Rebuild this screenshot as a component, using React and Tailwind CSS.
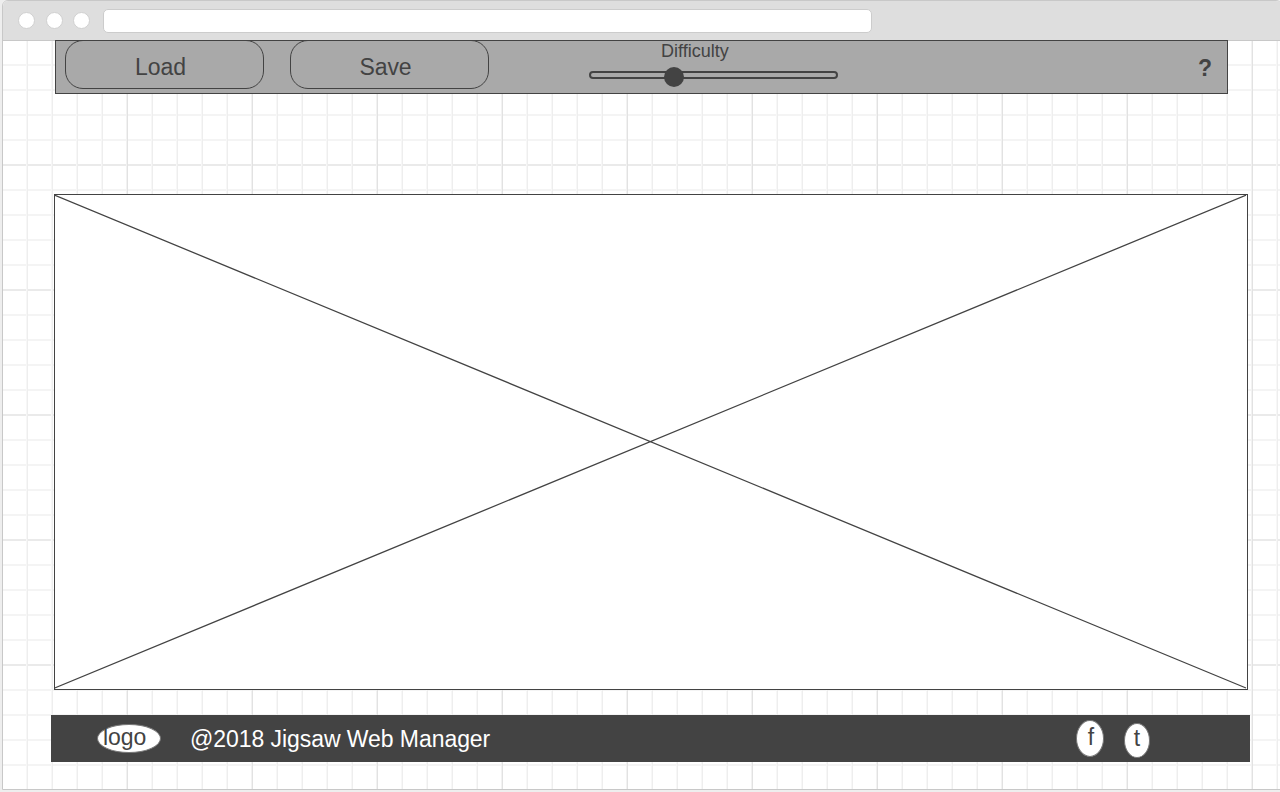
const COLUMNS = Array.from({ length: 51 }, (_, i) => i);
const ROWS = Array.from({ length: 30 }, (_, i) => i);

function GridPaper({ children }) {
  return (
    <main className="relative h-[748px] bg-white">
      <svg className="absolute inset-0 h-full w-full" shapeRendering="crispEdges" aria-hidden="true">
        {ROWS.map((i) => (
          <rect key={i} x="0" y={23 + 25 * i} width="1280" height="2" fill={i % 5 === 4 ? "#eaeaea" : "#f4f4f4"} />
        ))}
        {COLUMNS.map((i) => (
          <g key={i}>
            <rect x={23 + 25 * i} y="0" width="1" height="748" fill={i % 5 === 4 ? "#f2f2f2" : "#f7f7f7"} />
            <rect x={24 + 25 * i} y="0" width="1" height="748" fill={i % 5 === 4 ? "#e2e2e2" : "#eeeeee"} />
          </g>
        ))}
      </svg>
      <div className="relative flex h-full flex-col items-start">{children}</div>
    </main>
  );
}

function BrowserBar() {
  return (
    <header className="flex h-10 items-center border-b border-[#c8c8c8] bg-[#dedede] pl-[15px]">
      <span className="size-[17px] rounded-full border border-[#d0d0d0] bg-white" />
      <span className="ml-[11px] size-[17px] rounded-full border border-[#d0d0d0] bg-white" />
      <span className="ml-[10px] size-[17px] rounded-full border border-[#d0d0d0] bg-white" />
      <div className="ml-[13px] h-6 w-[769px] rounded-[5px] border border-[#cccccc] bg-white" />
    </header>
  );
}

function ToolbarButton({ children }) {
  return (
    <button className="flex h-[49px] w-[199px] items-start justify-center rounded-[18px] border border-[#434343] pt-[13px] pr-[8px] leading-[26px]">
      {children}
    </button>
  );
}

function Toolbar() {
  return (
    <nav className="-mt-px ml-[52px] flex h-[54px] w-[1173px] items-start border border-[#434343] bg-[#a9a9a9] pl-[9px]">
      <div className="-mt-px flex gap-[26px]">
        <ToolbarButton>Load</ToolbarButton>
        <ToolbarButton>Save</ToolbarButton>
      </div>
      <div className="ml-[100px] flex w-[249px] flex-col">
        <span className="ml-[72px] text-[18px] leading-5 tracking-normal">Difficulty</span>
        <div className="relative mt-[10px] h-2 rounded-[4px] border-2 border-[#434343]">
          <span className="absolute -top-[6px] left-[73px] size-5 rounded-full bg-[#434343]" />
        </div>
      </div>
      <span className="mt-[14px] ml-[360px] font-bold leading-[26px]">?</span>
    </nav>
  );
}

function ImagePlaceholder() {
  return (
    <section className="mt-[100px] ml-[51px] h-[496px] w-[1194px] shrink-0 border border-[#434343] bg-white">
      <svg className="block h-[494px] w-[1192px]" viewBox="0 0 1192 494" fill="none" stroke="#434343" strokeWidth="1.3">
        <path d="M-.3 .2L1191 493M-.3 493L1191 .2" />
      </svg>
    </section>
  );
}

function Footer() {
  return (
    <footer className="mt-[25px] ml-12 flex h-[47px] w-[1199px] shrink-0 items-start bg-[#434343] pl-[46px] leading-[26px]">
      <span className="mt-[9px] h-[29px] w-16 rounded-[50%] border border-[#777777] bg-white pl-[5px]">
        <span className="-mt-px block">logo</span>
      </span>
      <span className="mt-[11px] ml-[29px] w-[320px] whitespace-nowrap text-white">@2018 Jigsaw Web Manager</span>
      <span className="mt-[5px] ml-[566px] h-[37px] w-7 rounded-[50%] border border-[#777777] bg-white pt-[3px] pl-[2px] text-center">f</span>
      <span className="mt-2 ml-5 h-[35px] w-[26px] rounded-[50%] border border-[#777777] bg-white pt-px text-center">t</span>
    </footer>
  );
}

export default function App() {
  return (
    <div className="h-[792px] w-[1280px] overflow-hidden bg-[#eeeeee] pl-[2px] font-['Liberation_Sans',Arial,sans-serif] text-[23px] tracking-[-0.06px] text-[#434343]">
      <div className="h-[790px] w-[1280px] overflow-hidden rounded-t-[6px] border border-[#c8c8c8] bg-white">
        <BrowserBar />
        <GridPaper>
          <Toolbar />
          <ImagePlaceholder />
          <Footer />
        </GridPaper>
      </div>
    </div>
  );
}
